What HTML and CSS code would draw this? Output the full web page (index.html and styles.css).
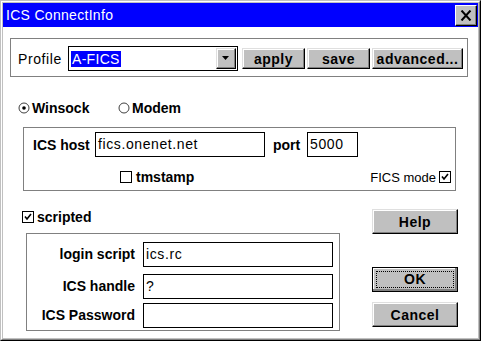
FILE: index.html
```html
<!DOCTYPE html>
<html lang="en">
  <head>
    <meta charset="UTF-8" />
    <meta name="viewport" content="width=device-width, initial-scale=1.0" />
    <title>ICS ConnectInfo</title>
    <link rel="stylesheet" href="styles.css">
  </head>
  <body>
    <div class="window">
      <div class="frame">
        <div class="titlebar">
          <span class="title">ICS ConnectInfo</span>
          <button class="close-btn" aria-label="Close">
            <svg width="12" height="11" viewBox="0 0 12 11">
              <path d="M1.5 0.5 L10.5 10.5 M10.5 0.5 L1.5 10.5" stroke="#000" stroke-width="2" fill="none" />
            </svg>
          </button>
        </div>

        <div class="client">
          <div class="group profile-group">
            <span class="profile-label">Profile</span>
            <div class="combo">
              <span class="combo-value"><span class="selected">A-FICS</span></span>
              <span class="combo-btn">
                <svg width="8" height="5" viewBox="0 0 8 5"><path d="M0 0 H7 L3.5 4 Z" fill="#000" /></svg>
              </span>
            </div>
            <button class="btn btn-apply">apply</button>
            <button class="btn btn-save">save</button>
            <button class="btn btn-advanced">advanced...</button>
          </div>

          <div class="radio-row">
            <label class="radio radio-winsock">
              <svg width="12" height="12" viewBox="0 0 12 12">
                <circle cx="6" cy="6" r="5" fill="#fff" stroke="#404040" />
                <circle cx="6" cy="6" r="1.8" fill="#000" />
              </svg>
              Winsock
            </label>
            <label class="radio">
              <svg width="12" height="12" viewBox="0 0 12 12">
                <circle cx="6" cy="6" r="5" fill="#fff" stroke="#404040" />
              </svg>
              Modem
            </label>
          </div>

          <div class="group host-group">
            <div class="host-row">
              <span class="host-label">ICS host</span>
              <div class="field host-field">fics.onenet.net</div>
              <span class="port-label">port</span>
              <div class="field port-field">5000</div>
            </div>
            <div class="option-row">
              <label class="check tmstamp">
                <svg width="12" height="12" viewBox="0 0 12 12">
                  <rect x="0.5" y="0.5" width="11" height="11" fill="#fff" stroke="#000" />
                </svg>
                tmstamp
              </label>
              <label class="check fics-mode">
                FICS mode
                <svg width="12" height="12" viewBox="0 0 12 12">
                  <rect x="0.5" y="0.5" width="11" height="11" fill="#fff" stroke="#000" />
                  <path d="M3 5.5 L5 8 L9 3" stroke="#000" stroke-width="1.6" fill="none" />
                </svg>
              </label>
            </div>
          </div>

          <div class="lower">
            <div class="lower-left">
              <label class="check scripted">
                <svg width="12" height="12" viewBox="0 0 12 12">
                  <rect x="0.5" y="0.5" width="11" height="11" fill="#fff" stroke="#000" />
                  <path d="M3 5.5 L5 8 L9 3" stroke="#000" stroke-width="1.6" fill="none" />
                </svg>
                scripted
              </label>
              <div class="group login-group">
                <span class="login-label">login script</span>
                <div class="field">ics.rc</div>
                <span class="login-label">ICS handle</span>
                <div class="field">?</div>
                <span class="login-label">ICS Password</span>
                <div class="field"></div>
              </div>
            </div>
            <div class="lower-right">
              <button class="btn dlg-btn">Help</button>
              <button class="btn dlg-btn btn-ok"><span class="focus">OK</span></button>
              <button class="btn dlg-btn btn-cancel">Cancel</button>
            </div>
          </div>
        </div>
      </div>
    </div>
  </body>
</html>
```

FILE: styles.css
```css
body {
  margin: 0;
  font-family: "Liberation Sans", Arial, sans-serif;
  font-size: 14px;
  color: #000;
}
.window {
  width: 481px;
  height: 341px;
  box-sizing: border-box;
  border: 1px solid;
  border-color: #c0c0c0 #000 #000 #c0c0c0;
}
.frame {
  height: 100%;
  box-sizing: border-box;
  border: 1px solid;
  border-color: #fff #808080 #808080 #fff;
  padding: 1px;
  background: #c0c0c0;
  display: flex;
  flex-direction: column;
}
.titlebar {
  height: 24px;
  flex: none;
  background: #0000ff;
  color: #fff;
  display: flex;
  align-items: center;
  padding: 0 1px 0 3px;
}
.title {
  flex: 1;
  letter-spacing: 0.3px;
}
.close-btn {
  width: 22px;
  height: 21px;
  padding: 0;
  display: flex;
  align-items: center;
  justify-content: center;
  background: #c0c0c0;
  border: 1px solid;
  border-color: #fff #000 #000 #fff;
  box-shadow: inset -1px -1px #808080;
}
.client {
  flex: 1;
  background: #fff;
  padding: 11px 0 0 7px;
}
.group {
  box-sizing: border-box;
  border: 1px solid #808080;
}

/* profile */
.profile-group {
  width: 458px;
  height: 39px;
  display: flex;
  align-items: center;
  padding: 2px 0 0 7px;
}
.profile-label {
  width: 50px;
  letter-spacing: 0.6px;
}
.combo {
  width: 170px;
  height: 25px;
  box-sizing: border-box;
  border: 1px solid #000;
  display: flex;
  align-items: center;
  padding: 0 1px 0 2px;
}
.combo-value {
  flex: 1;
}
.selected {
  background: #0000ff;
  color: #fff;
  padding: 0 1px;
  letter-spacing: 0.3px;
}
.combo-btn {
  width: 20px;
  height: 21px;
  box-sizing: border-box;
  display: flex;
  align-items: center;
  justify-content: center;
  background: #c0c0c0;
  border: 1px solid;
  border-color: #dfdfdf #000 #000 #dfdfdf;
  box-shadow: inset -1px -1px #808080, inset 1px 1px #fff;
}
.btn {
  font-family: inherit;
  font-size: 14px;
  font-weight: bold;
  letter-spacing: 0.5px;
  color: #000;
  height: 21px;
  padding: 0;
  box-sizing: border-box;
  background: #c0c0c0;
  border: 1px solid;
  border-color: #dfdfdf #000 #000 #dfdfdf;
  box-shadow: inset -1px -1px #808080, inset 1px 1px #fff;
}
.btn-apply {
  width: 63px;
  margin-left: 4px;
}
.btn-save {
  width: 63px;
  margin-left: 2px;
}
.btn-advanced {
  width: 91px;
  margin-left: 2px;
}

/* connection type */
.radio-row {
  display: flex;
  height: 16px;
  margin-top: 23px;
  padding-left: 8px;
  font-weight: bold;
}
.radio {
  display: flex;
  align-items: center;
  gap: 2px;
}
.radio-winsock {
  width: 100px;
}

/* host */
.host-group {
  width: 433px;
  height: 64px;
  margin: 11px 0 0 13px;
  padding: 4px 4px 0 9px;
}
.host-row {
  display: flex;
  align-items: center;
  height: 25px;
  font-weight: bold;
}
.host-label {
  width: 62px;
}
.field {
  height: 25px;
  box-sizing: border-box;
  border: 1px solid #000;
  padding-left: 2px;
  font-weight: normal;
  letter-spacing: 0.6px;
  line-height: 22px;
}
.host-field {
  width: 170px;
}
.port-label {
  width: 34px;
  margin-left: 8px;
}
.port-field {
  width: 51px;
}
.option-row {
  display: flex;
  height: 16px;
  margin-top: 12px;
}
.check {
  display: flex;
  align-items: center;
  gap: 4px;
}
.tmstamp {
  margin-left: 87px;
  font-weight: bold;
}
.fics-mode {
  margin-left: auto;
  font-size: 13px;
  gap: 3px;
}

/* scripted login */
.lower {
  display: flex;
  margin: 18px 0 0 12px;
}
.scripted {
  height: 16px;
  gap: 3px;
  font-weight: bold;
}
.login-group {
  width: 314px;
  height: 98px;
  margin: 8px 0 0 4px;
  padding-top: 7px;
  display: grid;
  grid-template-columns: 108px 190px;
  grid-template-rows: 26px 32px 29px;
  column-gap: 8px;
  align-items: end;
}
.login-group .field {
  height: 25px;
}
.login-label {
  text-align: right;
  font-weight: bold;
  line-height: 25px;
}
.lower-right {
  display: flex;
  flex-direction: column;
  margin-left: 32px;
}
.dlg-btn {
  width: 86px;
  height: 25px;
}
.btn-ok {
  margin-top: 33px;
  border: 1px solid #000;
  box-shadow: inset -2px -2px #808080, inset 1px 1px #fff;
  padding: 3px;
}
.focus {
  display: block;
  height: 100%;
  box-sizing: border-box;
  border: 1px dotted #000;
  line-height: 15px;
}
.btn-cancel {
  margin-top: 10px;
}
```
